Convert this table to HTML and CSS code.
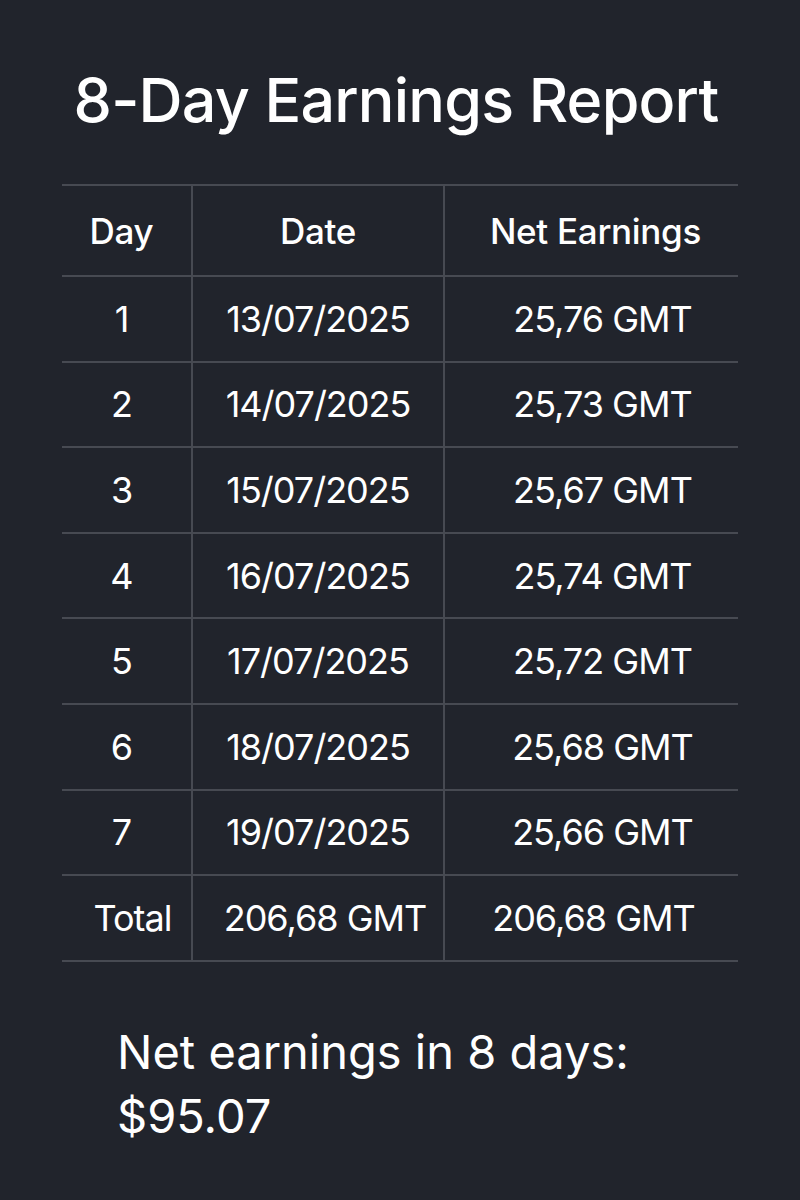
FILE: index.html
```html
<!DOCTYPE html>
<html>
<head>
<meta charset="utf-8">
<link rel="stylesheet" href="styles.css">
</head>
<body>
<main class="page">
  <h1 class="title">8-Day Earnings Report</h1>
  <table class="report">
    <colgroup><col class="w-day"><col class="w-date"><col class="w-net"></colgroup>
    <thead>
      <tr><th class="c-day">Day</th><th class="c-date">Date</th><th class="c-net">Net Earnings</th></tr>
    </thead>
    <tbody>
      <tr><td class="c-day">1</td><td class="c-date">13/07/2025</td><td class="c-net">25,76 GMT</td></tr>
      <tr><td class="c-day">2</td><td class="c-date">14/07/2025</td><td class="c-net">25,73 GMT</td></tr>
      <tr><td class="c-day">3</td><td class="c-date">15/07/2025</td><td class="c-net">25,67 GMT</td></tr>
      <tr><td class="c-day">4</td><td class="c-date">16/07/2025</td><td class="c-net">25,74 GMT</td></tr>
      <tr><td class="c-day">5</td><td class="c-date">17/07/2025</td><td class="c-net">25,72 GMT</td></tr>
      <tr><td class="c-day">6</td><td class="c-date">18/07/2025</td><td class="c-net">25,68 GMT</td></tr>
      <tr><td class="c-day">7</td><td class="c-date">19/07/2025</td><td class="c-net">25,66 GMT</td></tr>
      <tr class="total"><td class="c-day">Total</td><td class="c-date">206,68 GMT</td><td class="c-net">206,68 GMT</td></tr>
    </tbody>
  </table>
  <p class="summary">Net earnings in 8 days:<br>$95.07</p>
</main>
</body>
</html>
```

FILE: styles.css
```css
html, body {
  margin: 0;
  padding: 0;
  background: #21242c;
}
body {
  width: 800px;
  height: 1200px;
  overflow: hidden;
  color: #ffffff;
  font-family: Inter, "Noto Sans", "Liberation Sans", sans-serif;
}
.page {
  padding-top: 65px;
}
.title {
  margin: 0 0 49px 0;
  font-size: 61px;
  line-height: 70px;
  font-weight: 500;
  text-align: center;
  letter-spacing: -0.8px;
  padding-right: 8px;
}
.report {
  margin-left: 62px;
  width: 676px;
  border-collapse: collapse;
  table-layout: fixed;
  font-size: 36px;
  font-weight: 400;
  letter-spacing: -1px;
}
.w-day { width: 130px; }
.w-date { width: 252px; }
.w-net { width: 294px; }
.report th, .report td {
  border-top: 2px solid #474a52;
  border-bottom: 2px solid #474a52;
  text-align: center;
  padding: 0;
  height: 83.6px;
}
.report th {
  height: 89px;
  font-weight: 500;
  font-size: 35px;
  letter-spacing: -0.3px;
}
.report .c-date {
  border-left: 2px solid #474a52;
  border-right: 2px solid #474a52;
}
.report .c-day { padding-right: 10px; }
.report th.c-net { padding-left: 8px; }
.report td.c-net { padding-left: 22px; }
.report .total .c-day { padding-right: 0; padding-left: 12px; }
.report .total .c-date { padding-left: 14px; }
.report .total .c-net { padding-left: 4px; }
.summary {
  margin: 58px 0 0 117px;
  font-size: 47px;
  line-height: 64px;
}
```
